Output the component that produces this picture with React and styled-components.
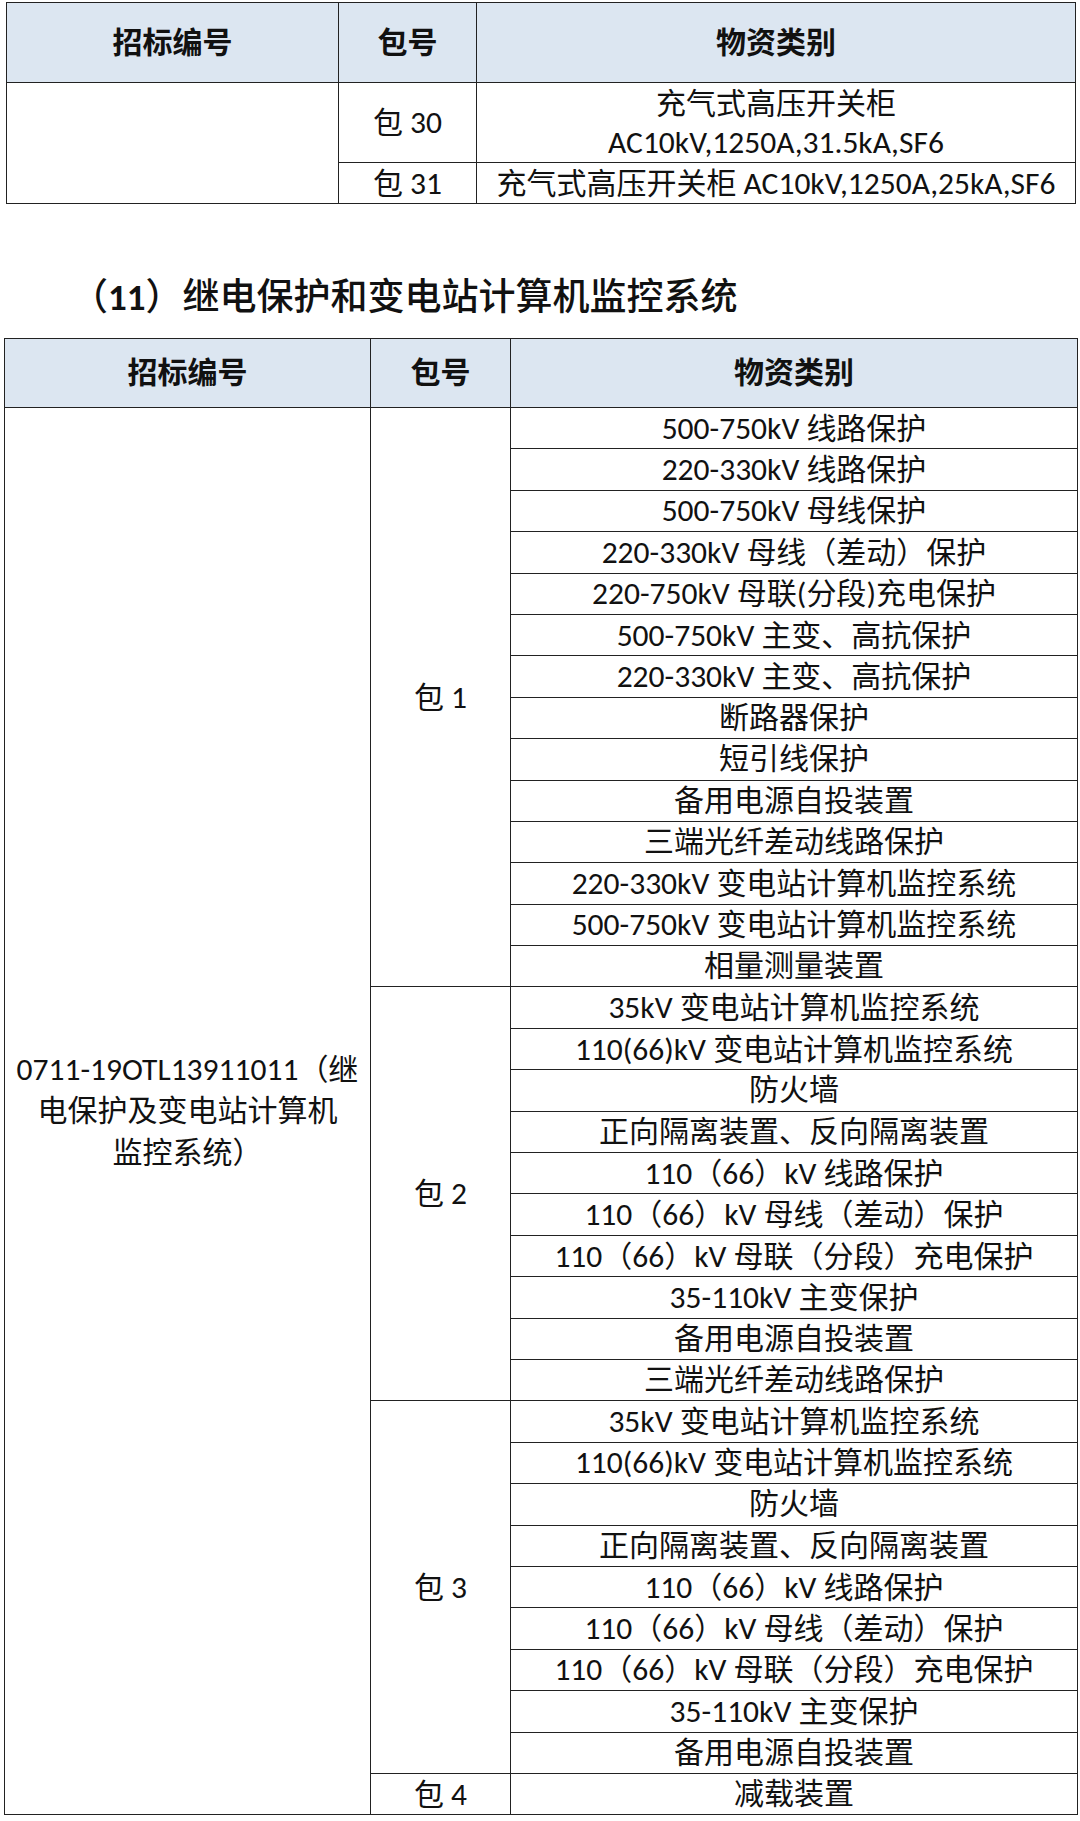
import React from 'react'
import styled, { createGlobalStyle } from 'styled-components'

const GlobalStyle = createGlobalStyle`
  html, body {
    margin: 0;
    padding: 0;
    background: #ffffff;
  }
  body {
    font-family: Carlito, Lato, "Noto Sans CJK SC", sans-serif;
    color: #111111;
  }
`

const groups = [
  {
    pkg: '包 1',
    items: [
      '500-750kV 线路保护',
      '220-330kV 线路保护',
      '500-750kV 母线保护',
      '220-330kV 母线（差动）保护',
      '220-750kV 母联(分段)充电保护',
      '500-750kV 主变、高抗保护',
      '220-330kV 主变、高抗保护',
      '断路器保护',
      '短引线保护',
      '备用电源自投装置',
      '三端光纤差动线路保护',
      '220-330kV 变电站计算机监控系统',
      '500-750kV 变电站计算机监控系统',
      '相量测量装置',
    ],
  },
  {
    pkg: '包 2',
    items: [
      '35kV 变电站计算机监控系统',
      '110(66)kV 变电站计算机监控系统',
      '防火墙',
      '正向隔离装置、反向隔离装置',
      '110（66）kV 线路保护',
      '110（66）kV 母线（差动）保护',
      '110（66）kV 母联（分段）充电保护',
      '35-110kV 主变保护',
      '备用电源自投装置',
      '三端光纤差动线路保护',
    ],
  },
  {
    pkg: '包 3',
    items: [
      '35kV 变电站计算机监控系统',
      '110(66)kV 变电站计算机监控系统',
      '防火墙',
      '正向隔离装置、反向隔离装置',
      '110（66）kV 线路保护',
      '110（66）kV 母线（差动）保护',
      '110（66）kV 母联（分段）充电保护',
      '35-110kV 主变保护',
      '备用电源自投装置',
    ],
  },
  {
    pkg: '包 4',
    items: ['减载装置'],
  },
]

const totalRows = groups.reduce((n, g) => n + g.items.length, 0)

// latin runs are set a touch larger, like the western font in the source doc
const mix = (text) =>
  text
    .split(/([\x20-\x7E]+)/)
    .filter(Boolean)
    .map((part, i) =>
      /[\x20-\x7E]/.test(part) ? <Latin key={i}>{part}</Latin> : part
    )

const lines = (list) =>
  list.map((line, i) => (
    <React.Fragment key={i}>
      {i > 0 && <br />}
      {mix(line)}
    </React.Fragment>
  ))

const App = () => {
  return (
    <Page>
      <GlobalStyle />
      <Table $left={6} $width={1069}>
        <colgroup>
          <col style={{ width: 332 }} />
          <col style={{ width: 138 }} />
          <col style={{ width: 599 }} />
        </colgroup>
        <thead>
          <Row $h={80}>
            <HeadCell>招标编号</HeadCell>
            <HeadCell>包号</HeadCell>
            <HeadCell>物资类别</HeadCell>
          </Row>
        </thead>
        <tbody>
          <Row $h={80}>
            <Cell rowSpan={2} />
            <Cell>{mix('包 30')}</Cell>
            <Cell $lh={39}>
              {lines(['充气式高压开关柜', 'AC10kV,1250A,31.5kA,SF6'])}
            </Cell>
          </Row>
          <Row $h={41}>
            <Cell>{mix('包 31')}</Cell>
            <Cell>{mix('充气式高压开关柜 AC10kV,1250A,25kA,SF6')}</Cell>
          </Row>
        </tbody>
      </Table>

      <SectionTitle>
        （<Num>11</Num>）继电保护和变电站计算机监控系统
      </SectionTitle>

      <Table $left={4} $width={1073}>
        <colgroup>
          <col style={{ width: 366 }} />
          <col style={{ width: 140 }} />
          <col style={{ width: 567 }} />
        </colgroup>
        <thead>
          <Row $h={69}>
            <HeadCell>招标编号</HeadCell>
            <HeadCell>包号</HeadCell>
            <HeadCell>物资类别</HeadCell>
          </Row>
        </thead>
        <tbody>
          {groups.map((group, gi) =>
            group.items.map((item, i) => (
              <Row $h={41.4} key={`${gi}-${i}`}>
                {gi === 0 && i === 0 && (
                  <Cell rowSpan={totalRows} $lh={41.5}>
                    {lines([
                      '0711-19OTL13911011（继',
                      '电保护及变电站计算机',
                      '监控系统）',
                    ])}
                  </Cell>
                )}
                {i === 0 && (
                  <Cell rowSpan={group.items.length}>{mix(group.pkg)}</Cell>
                )}
                <Cell>{mix(item)}</Cell>
              </Row>
            ))
          )}
        </tbody>
      </Table>
    </Page>
  )
}

const Page = styled.div`
  width: 1080px;
  padding-top: 2px;
`

const Table = styled.table`
  margin-left: ${(p) => p.$left}px;
  width: ${(p) => p.$width}px;
  border-collapse: collapse;
  table-layout: fixed;
  font-size: 30px;
`

const Row = styled.tr`
  height: ${(p) => p.$h}px;
`

const HeadCell = styled.th`
  background: #dce6f1;
  border: 1px solid #222222;
  padding: 0;
  font-weight: 700;
  text-align: center;
  vertical-align: middle;
  line-height: 36px;
`

const Cell = styled.td`
  border: 1px solid #222222;
  padding: 0;
  text-align: center;
  vertical-align: middle;
  line-height: ${(p) => p.$lh || 36}px;
  white-space: nowrap;
`

const Latin = styled.span`
  font-size: 1.05em;
`

const SectionTitle = styled.h2`
  margin: 69px 0 15px;
  padding-left: 71px;
  font-size: 37px;
  font-weight: 500;
  line-height: 50px;
  color: #111111;
`

const Num = styled.span`
  font-weight: 700;
`

export default App
